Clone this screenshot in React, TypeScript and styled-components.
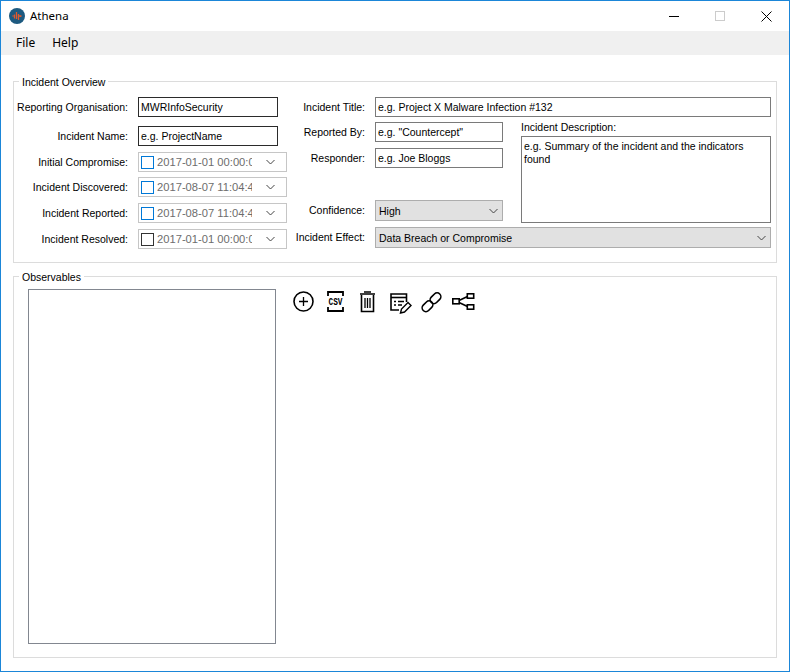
import React from "react";
import styled, { createGlobalStyle } from "styled-components";

const Global = createGlobalStyle`
  html, body { margin: 0; padding: 0; background: #fff; }
  body { font-family: "Liberation Sans", Arial, sans-serif; font-size: 10.5px; color: #000; }
`;

const Win = styled.div`
  box-sizing: border-box;
  width: 790px;
  height: 672px;
  border: 1px solid #1b86d8;
  display: flex;
  flex-direction: column;
  background: #fff;
  overflow: hidden;
`;

const TitleBar = styled.div`
  box-sizing: border-box;
  height: 30px;
  flex: none;
  display: flex;
  align-items: center;
  padding-left: 8px;
  font-family: "Noto Sans", "Open Sans", sans-serif;
  font-size: 11.5px;
`;

const TitleText = styled.span`
  margin-left: 5px;
  margin-top: -2px;
  flex: 1;
`;

const Ctrl = styled.div`
  width: 46px;
  height: 30px;
  display: flex;
  align-items: center;
  justify-content: center;
`;

const MenuBar = styled.div`
  box-sizing: border-box;
  height: 24px;
  flex: none;
  background: #f0f0f0;
  display: flex;
  align-items: center;
  padding: 0 0 2px 7px;
  font-family: "Noto Sans", "Open Sans", sans-serif;
  font-size: 12px;
`;

const MenuItem = styled.span`
  padding: 0 8px;
  margin-right: 1px;
`;

const Main = styled.div`
  flex: 1;
  padding: 19px 12px 0;
  display: flex;
  flex-direction: column;
`;

const Group = styled.fieldset<{ $h: number; $mt?: number }>`
  box-sizing: border-box;
  margin: ${(p) => p.$mt ?? 0}px 0 0;
  padding: 0;
  height: ${(p) => p.$h}px;
  border: 1px solid #dcdcdc;
  min-width: 0;
`;

const Legend = styled.legend`
  margin-left: 5px;
  padding: 0 3px;
  height: 14px;
  line-height: 17px;
  font-size: 10.5px;
`;

const OverviewBody = styled.div`
  display: flex;
  padding-top: 9px;
`;

const LeftCol = styled.div`
  display: flex;
  flex-direction: column;
  width: 278px;
  flex: none;
`;

const LeftRow = styled.div<{ $gap: number }>`
  display: flex;
  align-items: center;
  height: 20px;
  margin-top: ${(p) => p.$gap}px;
`;

const Label = styled.div<{ $w: number }>`
  width: ${(p) => p.$w}px;
  flex: none;
  margin-right: 10px;
  text-align: right;
  white-space: nowrap;
`;

const Field = styled.div<{ $w?: number; $dark?: boolean }>`
  box-sizing: border-box;
  width: ${(p) => (p.$w ? `${p.$w}px` : "auto")};
  height: 20px;
  border: 1px solid ${(p) => (p.$dark ? "#2b2b2b" : "#7a7a7a")};
  padding-left: 2px;
  line-height: 18px;
  white-space: nowrap;
  overflow: hidden;
  background: #fff;
`;

const DateBox = styled.div`
  box-sizing: border-box;
  width: 149px;
  height: 20px;
  border: 1px solid #c6c6c6;
  display: flex;
  align-items: center;
  padding-left: 2px;
  color: #6d6d6d;
`;

const Check = styled.div<{ $on?: boolean }>`
  box-sizing: border-box;
  width: 13px;
  height: 13px;
  flex: none;
  border: 1px solid ${(p) => (p.$on ? "#0078d7" : "#333")};
  margin-right: 3px;
`;

const DateText = styled.div`
  width: 95px;
  flex: none;
  overflow: hidden;
  white-space: nowrap;
  font-size: 11.2px;
`;

const ChevWrap = styled.div`
  flex: 1;
  display: flex;
  justify-content: center;
  padding-left: 3px;
`;

const RightGrid = styled.div`
  margin-left: 1px;
  display: grid;
  grid-template-columns: 72px 138px 18px 250px;
  grid-template-rows: 25px 26px 52px 27px 21px;
  width: 478px;
  flex: none;
`;

const GridLabel = styled.div<{ $row: number; $lh?: number }>`
  grid-column: 1;
  grid-row: ${(p) => p.$row};
  height: 20px;
  line-height: ${(p) => p.$lh ?? 20}px;
  text-align: right;
  white-space: nowrap;
`;

const GridField = styled(Field)<{ $row: number; $wide?: boolean }>`
  grid-column: ${(p) => (p.$wide ? "2 / 5" : "2")};
  grid-row: ${(p) => p.$row};
  margin-left: 10px;
`;

const Combo = styled.div<{ $row: number; $wide?: boolean }>`
  box-sizing: border-box;
  grid-column: ${(p) => (p.$wide ? "2 / 5" : "2")};
  grid-row: ${(p) => p.$row};
  margin-left: 10px;
  height: 21px;
  background: #e1e1e1;
  border: 1px solid #adadad;
  display: flex;
  align-items: center;
  justify-content: space-between;
  padding: 0 4px 0 3px;
`;

const DescCol = styled.div`
  grid-column: 4;
  grid-row: 2 / 5;
  display: flex;
  flex-direction: column;
`;

const DescLabel = styled.div`
  height: 14px;
  line-height: 11px;
`;

const DescBox = styled.div`
  box-sizing: border-box;
  height: 87px;
  border: 1px solid #7a7a7a;
  padding: 3px 2px;
  line-height: 13px;
`;

const ObsBody = styled.div`
  display: flex;
  padding: 6px 0 0 14px;
`;

const ListBox = styled.div`
  box-sizing: border-box;
  width: 248px;
  height: 355px;
  border: 1px solid #828790;
  background: #fff;
  flex: none;
`;

const Toolbar = styled.div`
  display: flex;
  margin-left: 12px;
  padding-top: 1px;
`;

const ToolBtn = styled.div`
  width: 32px;
  height: 24px;
  display: flex;
  justify-content: center;
`;

const Chevron = () => (
  <svg width="9" height="6" viewBox="0 0 9 6" fill="none">
    <path d="M0.5 1 L4.5 5 L8.5 1" stroke="#444" strokeWidth="1" />
  </svg>
);

const Logo = () => (
  <svg width="16" height="16" viewBox="0 0 16 16">
    <circle cx="8" cy="8" r="8" fill="#1d5a80" />
    <path d="M3.5 8h1M5.5 6.5v4M7.5 4v7M9.5 6v6M11.5 7.5v1.5M9.5 8h3" stroke="#e2592b" strokeWidth="1.3" fill="none" />
  </svg>
);

const Ic = ({ children }: { children: React.ReactNode }) => (
  <svg width="24" height="24" viewBox="0 0 24 24" fill="none" stroke="#000" strokeWidth="1.6">
    {children}
  </svg>
);

const CsvText = styled.text`
  font-family: "Liberation Mono", monospace;
  font-weight: 700;
  font-size: 11px;
  fill: #000;
  stroke: none;
`;

const dates = [
  { label: "Initial Compromise:", value: "2017-01-01 00:00:00", on: true, gap: 6 },
  { label: "Incident Discovered:", value: "2017-08-07 11:04:49", on: true, gap: 5 },
  { label: "Incident Reported:", value: "2017-08-07 11:04:49", on: true, gap: 6 },
  { label: "Incident Resolved:", value: "2017-01-01 00:00:00", on: false, gap: 6 },
];

export default function App() {
  return (
    <Win>
      <Global />
      <TitleBar>
        <Logo />
        <TitleText>Athena</TitleText>
        <Ctrl>
          <svg width="10" height="10" viewBox="0 0 10 10"><path d="M0 5.5H10" stroke="#000" /></svg>
        </Ctrl>
        <Ctrl>
          <svg width="10" height="10" viewBox="0 0 10 10"><rect x=".5" y=".5" width="9" height="9" fill="none" stroke="#ccc" /></svg>
        </Ctrl>
        <Ctrl>
          <svg width="11" height="11" viewBox="0 0 11 11"><path d="M.5.5l10 10M10.5.5l-10 10" stroke="#000" /></svg>
        </Ctrl>
      </TitleBar>
      <MenuBar>
        <MenuItem>File</MenuItem>
        <MenuItem>Help</MenuItem>
      </MenuBar>
      <Main>
        <Group $h={189}>
          <Legend>Incident Overview</Legend>
          <OverviewBody>
            <LeftCol>
              <LeftRow $gap={0}>
                <Label $w={114}>Reporting Organisation:</Label>
                <Field $w={140} $dark>MWRInfoSecurity</Field>
              </LeftRow>
              <LeftRow $gap={9}>
                <Label $w={114}>Incident Name:</Label>
                <Field $w={140} $dark>e.g. ProjectName</Field>
              </LeftRow>
              {dates.map((d) => (
                <LeftRow $gap={d.gap} key={d.label}>
                  <Label $w={114}>{d.label}</Label>
                  <DateBox>
                    <Check $on={d.on} />
                    <DateText>{d.value}</DateText>
                    <ChevWrap><Chevron /></ChevWrap>
                  </DateBox>
                </LeftRow>
              ))}
            </LeftCol>
            <RightGrid>
              <GridLabel $row={1}>Incident Title:</GridLabel>
              <GridField $row={1} $wide>e.g. Project X Malware Infection #132</GridField>
              <GridLabel $row={2}>Reported By:</GridLabel>
              <GridField $row={2}>e.g. "Countercept"</GridField>
              <GridLabel $row={3}>Responder:</GridLabel>
              <GridField $row={3}>e.g. Joe Bloggs</GridField>
              <GridLabel $row={4} $lh={21}>Confidence:</GridLabel>
              <Combo $row={4}>High<Chevron /></Combo>
              <GridLabel $row={5} $lh={21}>Incident Effect:</GridLabel>
              <Combo $row={5} $wide>Data Breach or Compromise<Chevron /></Combo>
              <DescCol>
                <DescLabel>Incident Description:</DescLabel>
                <DescBox>e.g. Summary of the incident and the indicators found</DescBox>
              </DescCol>
            </RightGrid>
          </OverviewBody>
        </Group>
        <Group $h={389} $mt={6}>
          <Legend>Observables</Legend>
          <ObsBody>
            <ListBox />
            <Toolbar>
              <ToolBtn>
                <Ic>
                  <circle cx="11.5" cy="11.5" r="9.5" />
                  <path d="M7 11.5H16M11.5 7V16" strokeWidth="1.3" />
                </Ic>
              </ToolBtn>
              <ToolBtn>
                <Ic>
                  <path d="M4 6V2H19V6M4 17V21H19V17" strokeWidth="1.8" />
                  <CsvText x="11.5" y="15" textAnchor="middle" textLength="14" lengthAdjust="spacingAndGlyphs">CSV</CsvText>
                </Ic>
              </ToolBtn>
              <ToolBtn>
                <Ic>
                  <path d="M8 2H15M4 4H19" />
                  <path d="M5.5 5V21.5H17.5V5" />
                  <path d="M9 8V18M11.5 8V18M14 8V18" strokeWidth="1.3" />
                </Ic>
              </ToolBtn>
              <ToolBtn>
                <Ic>
                  <path d="M18.5 12V4H3V20H11" />
                  <path d="M3 7.5H18.5" />
                  <path d="M6 11.5H8M10 11.5H16M6 15H8M10 15H14" strokeWidth="1.3" />
                  <path d="M12.5 23L13.5 19L20 12.5L23 15.5L16.5 22Z" strokeWidth="1.4" />
                </Ic>
              </ToolBtn>
              <ToolBtn>
                <Ic>
                  <rect x="1.5" y="12.5" width="12" height="7.5" rx="3.75" transform="rotate(-45 7.5 16.25)" />
                  <rect x="9.5" y="4.5" width="12" height="7.5" rx="3.75" transform="rotate(-45 15.5 8.25)" />
                </Ic>
              </ToolBtn>
              <ToolBtn>
                <Ic>
                  <rect x="0.8" y="8.8" width="6.4" height="5" />
                  <rect x="15.3" y="3.8" width="6.4" height="4.4" />
                  <rect x="15.3" y="14.8" width="6.4" height="4.4" />
                  <path d="M7 10.5L15.5 6.5M7 12.5L15.5 16.5" />
                </Ic>
              </ToolBtn>
            </Toolbar>
          </ObsBody>
        </Group>
      </Main>
    </Win>
  );
}
